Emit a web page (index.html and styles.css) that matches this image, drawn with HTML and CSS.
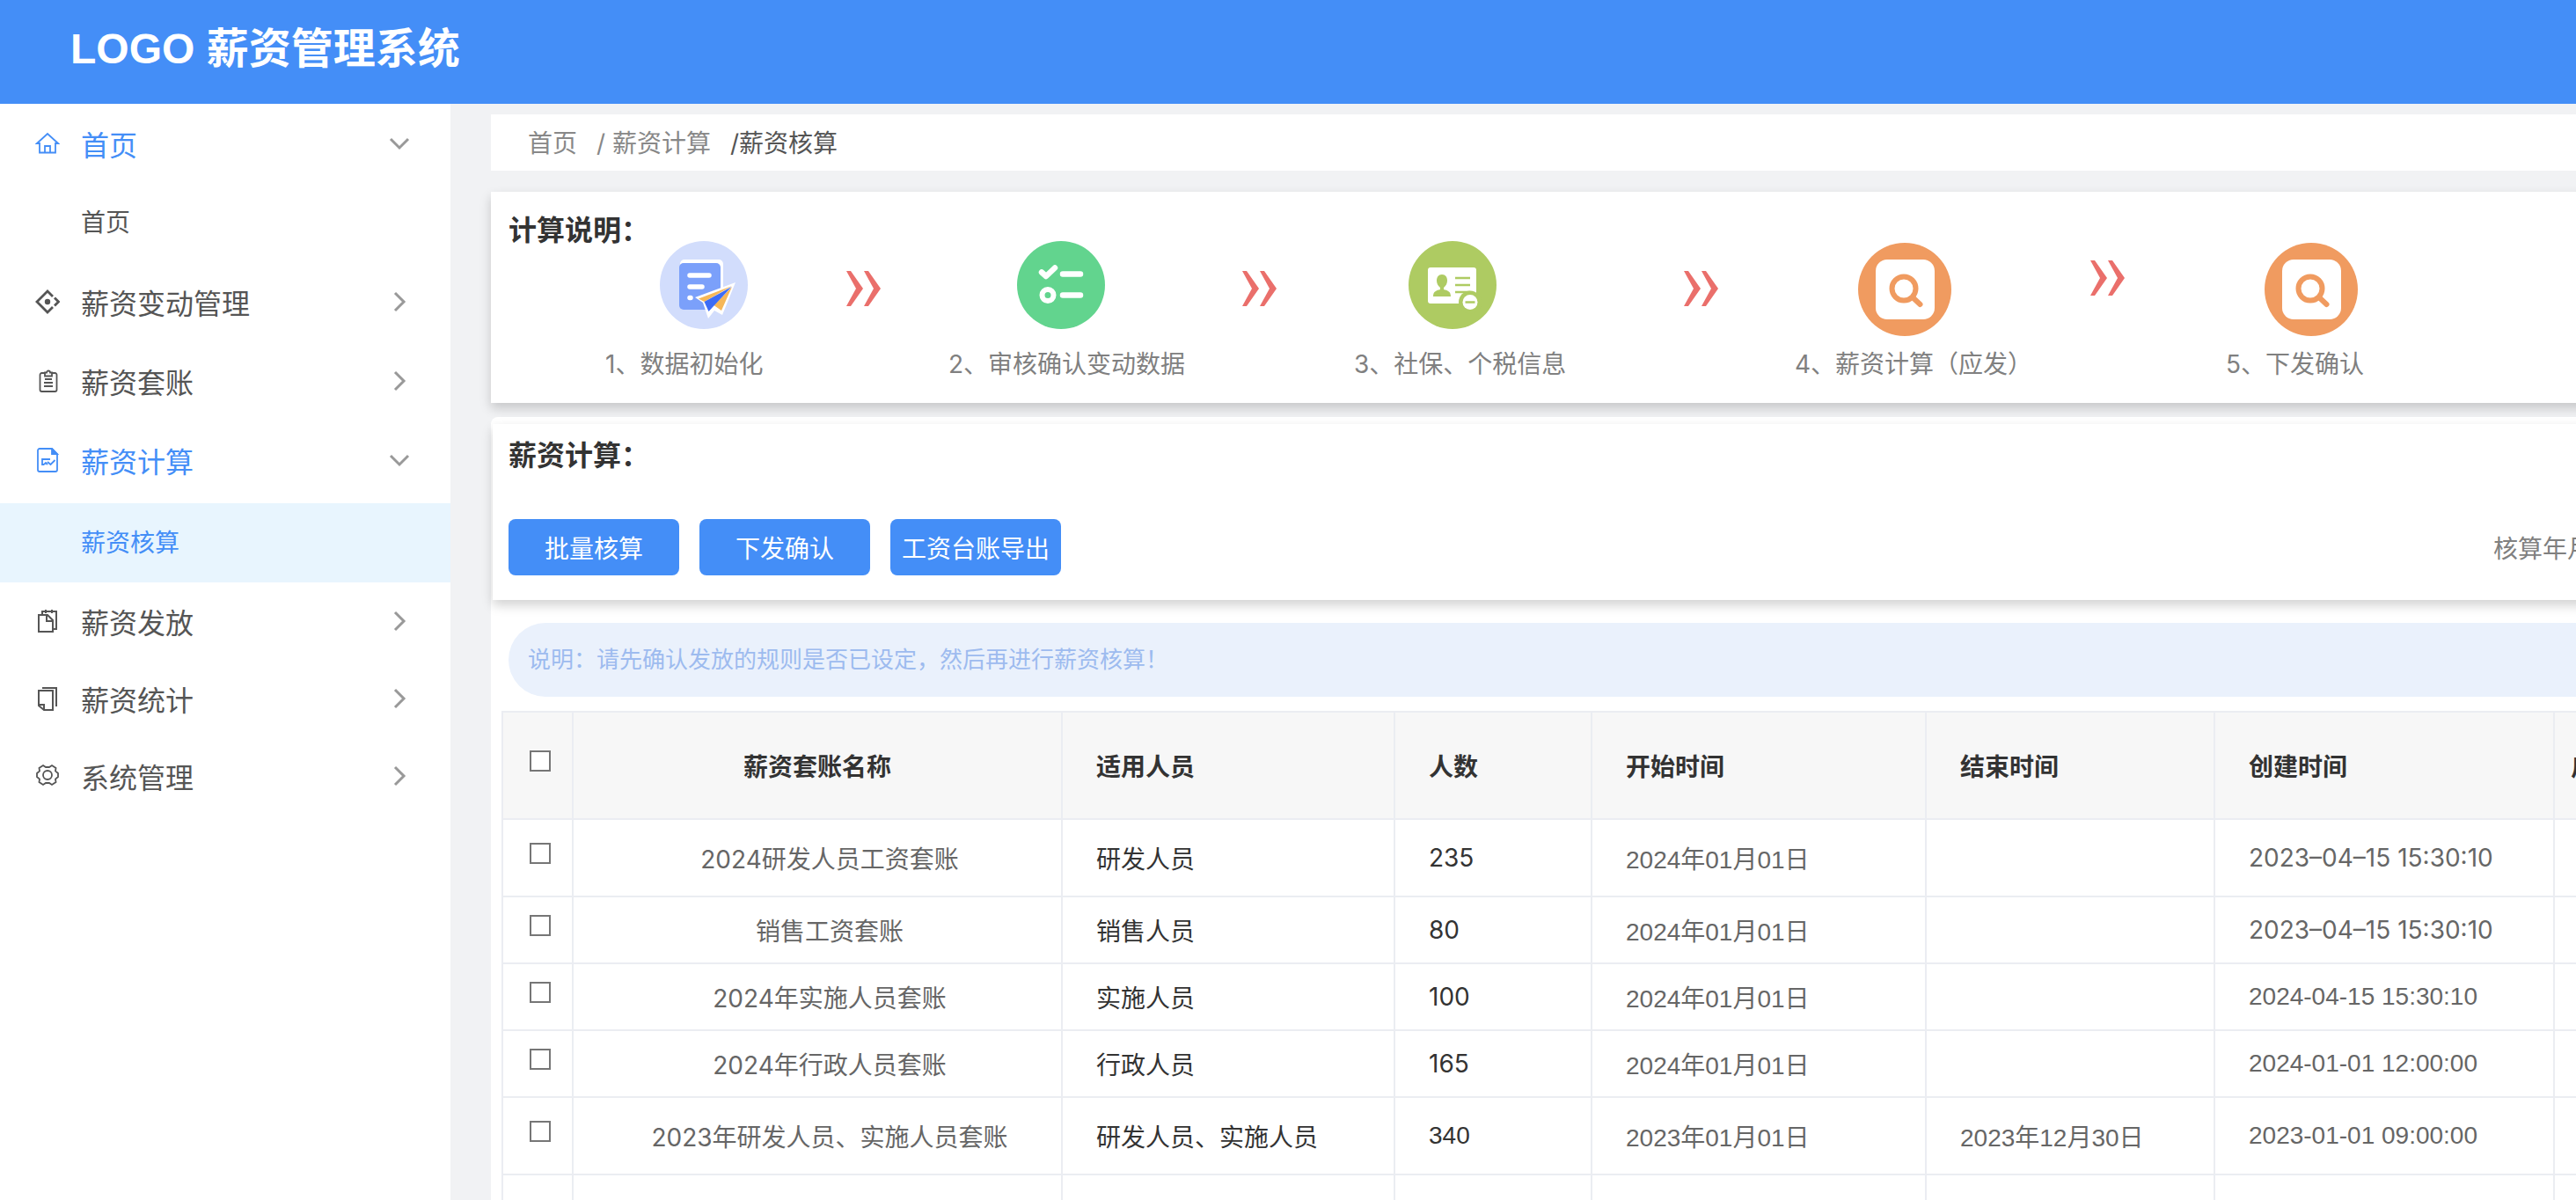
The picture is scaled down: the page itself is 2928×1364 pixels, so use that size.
FILE: index.html
```
<!DOCTYPE html>
<html lang="zh-CN">
<head>
    <meta charset="utf-8">
    <title>薪资管理系统</title>
    <link rel="stylesheet" href="styles.css">
</head>
<body>

<header class="header">
    <h1 class="logo">LOGO 薪资管理系统</h1>
</header>

<div class="page">
    <nav class="sidebar">
        <a href="#" class="menu-item active">
            <svg class="menu-icon" viewBox="0 0 28 28" fill="none" stroke="currentColor" stroke-width="1.800"><path d="M2 14 14 3l12 11h-3v10.500H5V14zM11 24v-7h6v7"/></svg>
            <span>首页</span>
            <svg class="chevron" viewBox="0 0 28 28"><path d="M4 9l10 10L24 9"/></svg>
        </a>
        <a href="#" class="menu-sub">首页</a>
        <a href="#" class="menu-item">
            <svg class="menu-icon" viewBox="0 0 28 28" fill="none" stroke="currentColor" stroke-width="2.800"><path d="M20 8l-6-6L2 14l12 12 6-6M22 9.500l4.500 4.500-4.500 4.500"/><circle cx="14" cy="14" r="3.200" fill="currentColor" stroke="none"/></svg>
            <span>薪资变动管理</span>
            <svg class="chevron" viewBox="0 0 28 28"><path d="M9 4l10 10L9 24"/></svg>
        </a>
        <a href="#" class="menu-item">
            <svg class="menu-icon" viewBox="0 0 28 28" fill="none" stroke="currentColor" stroke-width="1.800"><path d="M11 5H7.500a2 2 0 0 0-2 2v17a2 2 0 0 0 2 2h15a2 2 0 0 0 2-2V7a2 2 0 0 0-2-2H19M11 4.500h2a2 2 0 0 1 4 0h2v4h-8z"/><path d="M11 12h8M10 16h10M10 20h10"/></svg>
            <span>薪资套账</span>
            <svg class="chevron" viewBox="0 0 28 28"><path d="M9 4l10 10L9 24"/></svg>
        </a>
        <a href="#" class="menu-item active">
            <svg class="menu-icon" viewBox="0 0 28 28" fill="none" stroke="currentColor" stroke-width="1.800"><path d="M19 1H5a2 2 0 0 0-2 2v22a2 2 0 0 0 2 2h18a2 2 0 0 0 2-2V7z"/><path d="M19 1l6 6h-6z" fill="currentColor"/><path d="M10 19H8v-6h9M14 16l3.500 3 5-5M10 19l2-2 2 2"/></svg>
            <span>薪资计算</span>
            <svg class="chevron" viewBox="0 0 28 28"><path d="M4 9l10 10L24 9"/></svg>
        </a>
        <a href="#" class="menu-sub selected">薪资核算</a>
        <div class="menu-compact">
            <a href="#" class="menu-item">
                <svg class="menu-icon" viewBox="0 0 28 28" fill="none" stroke="currentColor" stroke-width="2"><path d="M4 7h10l6 6v13H4z"/><path d="M13 7v7h7M8 7V3h16v20h-4M12 1v4M19 1v4"/></svg>
                <span>薪资发放</span>
                <svg class="chevron" viewBox="0 0 28 28"><path d="M9 4l10 10L9 24"/></svg>
            </a>
            <a href="#" class="menu-item">
                <svg class="menu-icon" viewBox="0 0 28 28" fill="none" stroke="currentColor" stroke-width="2"><path d="M4 5h16v22H10l-6-5zM4 21h6v6M8 2h16v21"/></svg>
                <span>薪资统计</span>
                <svg class="chevron" viewBox="0 0 28 28"><path d="M9 4l10 10L9 24"/></svg>
            </a>
            <a href="#" class="menu-item">
                <svg class="menu-icon" viewBox="0 0 28 28" fill="none" stroke="currentColor" stroke-width="1.800"><path d="M9 2l3 2h4l3-2 4.500 3-.5 3.500 3 2.500v4l-3 2.500.5 3.500-4.500 3-3-2h-4l-3 2L4.500 21l.5-3.500L2 15v-4l3-2.500L4.500 5z"/><circle cx="14" cy="13" r="5"/></svg>
                <span>系统管理</span>
                <svg class="chevron" viewBox="0 0 28 28"><path d="M9 4l10 10L9 24"/></svg>
            </a>
        </div>
    </nav>

    <main class="main">
        <div class="content">
            <div class="breadcrumb">
                <a href="#">首页</a>
                <a href="#">/ 薪资计算</a>
                <span class="current">/薪资核算</span>
            </div>

            <section class="card guide">
                <h2 class="title">计算说明：</h2>
                <div class="steps">
                    <div class="step">
                        <svg class="step-icon" viewBox="0 0 100 100">
                            <circle cx="50" cy="50" r="50" fill="#d2ddfc"/>
                            <rect x="23" y="21" width="49" height="50" rx="5" fill="#fff"/>
                            <rect x="22" y="25" width="47" height="53" rx="5" fill="#7ba0fa"/>
                            <path d="M34 39h22M34 52h14M34 64.500h1" stroke="#fff" stroke-width="5.500" stroke-linecap="round"/>
                            <path d="M86 47 40 64l9 6 6 18 7-9 9 5z" fill="#fff"/>
                            <path d="M82 51 44 65.500l6.500 3.500zM82 52 61.500 73l8.500 6z" fill="#f6b758"/>
                            <path d="M81.500 52 50.500 69l5 11z" fill="#3c6cf6"/>
                        </svg>
                        <span>1、数据初始化</span>
                    </div>
                    <svg class="arrow" viewBox="0 0 39 40"><path d="M0 0h5l14 20L5 40H0l11-20zM20 0h5l14 20-14 20h-5l11-20z"/></svg>
                    <div class="step">
                        <svg class="step-icon" viewBox="0 0 100 100">
                            <circle cx="50" cy="50" r="50" fill="#62d48e"/>
                            <path d="M28 35.500l5 4.500 10-9.500M52 37.500h20M52 61.500h20" fill="none" stroke="#fff" stroke-width="6.500" stroke-linecap="round" stroke-linejoin="round"/>
                            <circle cx="35" cy="61.500" r="6.500" fill="none" stroke="#fff" stroke-width="6"/>
                        </svg>
                        <span>2、审核确认变动数据</span>
                    </div>
                    <svg class="arrow" viewBox="0 0 39 40"><path d="M0 0h5l14 20L5 40H0l11-20zM20 0h5l14 20-14 20h-5l11-20z"/></svg>
                    <div class="step">
                        <svg class="step-icon" viewBox="0 0 100 100">
                            <circle cx="50" cy="50" r="50" fill="#aecb62"/>
                            <rect x="22" y="30" width="55" height="41" rx="3" fill="#fff"/>
                            <path d="M38 38c-4 0-6 3-6 7 0 3 1.500 6 4 8v2c-4 1-8 2-8 8h20c0-6-4-7-8-8v-2c2.500-2 4-5 4-8 0-4-2-7-6-7z" fill="#aecb62"/>
                            <path d="M53 42h17M53 50h17M53 58h17" stroke="#aecb62" stroke-width="2.500"/>
                            <circle cx="70" cy="69.500" r="13" fill="#aecb62"/>
                            <circle cx="70" cy="69.500" r="8.500" fill="#fff"/>
                            <path d="M64.500 69.500h11" stroke="#aecb62" stroke-width="2.500"/>
                        </svg>
                        <span>3、社保、个税信息</span>
                    </div>
                    <svg class="arrow" viewBox="0 0 39 40"><path d="M0 0h5l14 20L5 40H0l11-20zM20 0h5l14 20-14 20h-5l11-20z"/></svg>
                    <div class="step">
                        <svg class="step-icon large" viewBox="0 0 106 106">
                            <circle cx="53" cy="53" r="53" fill="#f09b60"/>
                            <rect x="20" y="19" width="67" height="68" rx="13" fill="#fff"/>
                            <circle cx="52" cy="52" r="13.500" fill="none" stroke="#f09b60" stroke-width="6"/>
                            <path d="M62 62l8.500 8" stroke="#f09b60" stroke-width="6" stroke-linecap="round"/>
                        </svg>
                        <span>4、薪资计算（应发）</span>
                    </div>
                    <svg class="arrow high" viewBox="0 0 39 40"><path d="M0 0h5l14 20L5 40H0l11-20zM20 0h5l14 20-14 20h-5l11-20z"/></svg>
                    <div class="step">
                        <svg class="step-icon large" viewBox="0 0 106 106">
                            <circle cx="53" cy="53" r="53" fill="#f09b60"/>
                            <rect x="20" y="19" width="67" height="68" rx="13" fill="#fff"/>
                            <circle cx="52" cy="52" r="13.500" fill="none" stroke="#f09b60" stroke-width="6"/>
                            <path d="M62 62l8.500 8" stroke="#f09b60" stroke-width="6" stroke-linecap="round"/>
                        </svg>
                        <span>5、下发确认</span>
                    </div>
                </div>
            </section>

            <div class="panel">
                <section class="card tools">
                    <h2 class="title">薪资计算：</h2>
                    <div class="toolbar">
                        <button type="button" class="btn">批量核算</button>
                        <button type="button" class="btn">下发确认</button>
                        <button type="button" class="btn">工资台账导出</button>
                        <div class="filter">
                            <label for="month">核算年月：</label>
                            <input type="text" id="month">
                        </div>
                    </div>
                </section>

                <p class="hint">说明：请先确认发放的规则是否已设定，然后再进行薪资核算！</p>

                <table class="table">
                    <colgroup>
                        <col class="c-check"><col class="c-name"><col class="c-staff"><col class="c-num">
                        <col class="c-start"><col class="c-end"><col class="c-created"><col>
                    </colgroup>
                    <thead>
                        <tr>
                            <th class="check"><input type="checkbox" aria-label="全选"></th>
                            <th class="name">薪资套账名称</th>
                            <th>适用人员</th>
                            <th>人数</th>
                            <th>开始时间</th>
                            <th>结束时间</th>
                            <th>创建时间</th>
                            <th class="status">启用状态</th>
                        </tr>
                    </thead>
                    <tbody>
                        <tr class="tall">
                            <td class="check"><input type="checkbox" aria-label="2024研发人员工资套账"></td>
                            <td class="name">2024研发人员工资套账</td>
                            <td class="dark">研发人员</td>
                            <td class="dark">235</td>
                            <td class="date">2024年01月01日</td>
                            <td class="date"></td>
                            <td>2023–04–15 15:30:10</td>
                            <td></td>
                        </tr>
                        <tr>
                            <td class="check"><input type="checkbox" aria-label="销售工资套账"></td>
                            <td class="name">销售工资套账</td>
                            <td class="dark">销售人员</td>
                            <td class="dark">80</td>
                            <td class="date">2024年01月01日</td>
                            <td class="date"></td>
                            <td>2023–04–15 15:30:10</td>
                            <td></td>
                        </tr>
                        <tr>
                            <td class="check"><input type="checkbox" aria-label="2024年实施人员套账"></td>
                            <td class="name">2024年实施人员套账</td>
                            <td class="dark">实施人员</td>
                            <td class="dark">100</td>
                            <td class="date">2024年01月01日</td>
                            <td class="date"></td>
                            <td class="date">2024-04-15 15:30:10</td>
                            <td></td>
                        </tr>
                        <tr>
                            <td class="check"><input type="checkbox" aria-label="2024年行政人员套账"></td>
                            <td class="name">2024年行政人员套账</td>
                            <td class="dark">行政人员</td>
                            <td class="dark">165</td>
                            <td class="date">2024年01月01日</td>
                            <td class="date"></td>
                            <td class="date">2024-01-01 12:00:00</td>
                            <td></td>
                        </tr>
                        <tr class="tall">
                            <td class="check"><input type="checkbox" aria-label="2023年研发人员、实施人员套账"></td>
                            <td class="name">2023年研发人员、实施人员套账</td>
                            <td class="dark">研发人员、实施人员</td>
                            <td class="dark date">340</td>
                            <td class="date">2023年01月01日</td>
                            <td class="date">2023年12月30日</td>
                            <td class="date">2023-01-01 09:00:00</td>
                            <td></td>
                        </tr>
                        <tr>
                            <td></td><td></td><td></td><td></td><td></td><td></td><td></td><td></td>
                        </tr>
                    </tbody>
                </table>
            </div>
        </div>
    </main>
</div>

</body>
</html>
```
FILE: styles.css
```
* { box-sizing: border-box; }

html, body { height: 100%; }

body {
    margin: 0;
    display: flex;
    flex-direction: column;
    overflow: hidden;
    background: #f1f2f4;
    color: #666;
    font-family: Inter, "Noto Sans CJK SC", sans-serif;
    font-size: 28px;
}

a { color: inherit; text-decoration: none; }

.header {
    flex: none;
    height: 118px;
    padding: 0 80px;
    background: #448ef7;
}
.logo {
    margin: 0;
    color: #fff;
    font: bold 48px/112px "Liberation Sans", "Noto Sans CJK SC", sans-serif;
}

.page {
    flex: 1;
    min-height: 0;
    display: flex;
}

/* sidebar */
.sidebar {
    flex: none;
    width: 512px;
    background: #fff;
    color: #555;
}
.menu-item {
    display: flex;
    align-items: center;
    height: 90px;
    padding: 0 44px 0 40px;
    font-size: 32px;
}
.menu-item span { flex: 1; }
.menu-compact .menu-item { height: 88px; }
.menu-icon {
    width: 28px;
    height: 28px;
    margin-right: 24px;
}
.chevron {
    width: 28px;
    height: 28px;
    fill: none;
    stroke: #999;
    stroke-width: 3;
}
.menu-sub {
    display: block;
    padding-left: 92px;
    line-height: 90px;
}
.active, .selected { color: #448ef7; }
.selected {
    margin-top: 4px;
    background: #e8f5fe;
}

/* content */
.main {
    flex: 1;
    min-width: 0;
    padding: 12px 0 0 46px;
    overflow: hidden;
}
.content {
    min-width: 2600px;
    height: 100%;
    display: flex;
    flex-direction: column;
}
.breadcrumb {
    display: flex;
    gap: 22px;
    padding: 2px 0 0 42px;
    background: #fff;
    color: #888;
    line-height: 62px;
}
.breadcrumb .current { color: #555; }

.card {
    background: #fff;
    box-shadow: 0 6px 12px rgba(0, 0, 0, .18);
}
.title {
    margin: 0;
    color: #333;
    font-size: 32px;
    line-height: 32px;
}

.guide {
    margin-top: 24px;
    padding: 28px 0 24px 20px;
}
.steps {
    display: grid;
    grid-template-columns: 274px 116px 334px 127px 375px 126px 336px 154px 1fr;
    margin-top: -4px;
    padding-left: 110px;
    color: #808080;
    white-space: nowrap;
}
.step {
    display: grid;
    grid-template-rows: 120px 40px;
    line-height: 40px;
}
.step-icon {
    width: 100px;
    height: 100px;
    margin-left: 62px;
}
.step:nth-child(3) .step-icon { margin-left: 78px; }
.step-icon.large {
    width: 106px;
    height: 106px;
    margin: 2px 0 0 72px;
}
.step:last-child .step-icon { margin-left: 44px; }
.arrow {
    width: 39px;
    height: 40px;
    margin-top: 34px;
    fill: #ea6f6b;
}
.arrow.high { margin-top: 22px; }

.panel {
    flex: 1;
    margin-top: 16px;
    padding: 8px 0 0 2px;
    border-radius: 8px 0 0 0;
    background: #fff;
}

.tools { padding: 20px 20px 28px 18px; }
.toolbar {
    display: flex;
    align-items: center;
    gap: 23px;
    margin-top: 56px;
}
.btn {
    width: 194px;
    height: 64px;
    padding: 0;
    border: 0;
    border-radius: 8px;
    background: #448ef7;
    color: #fff;
    font: inherit;
}
.filter {
    display: flex;
    align-items: center;
    width: 304px;
    margin-left: auto;
    color: #808080;
    white-space: nowrap;
}
.filter input {
    flex: 1;
    min-width: 0;
    height: 64px;
    border: 2px solid #ddd;
    border-radius: 8px;
}

.hint {
    margin: 26px 0 16px 18px;
    padding-left: 22px;
    border-radius: 42px 0 0 42px;
    background: #eaf1fc;
    color: #9dbbef;
    font-size: 26px;
    line-height: 84px;
}

.table {
    width: 2572px;
    margin-left: 10px;
    table-layout: fixed;
    border-collapse: collapse;
}
.c-check { width: 80px; }
.c-name { width: 556px; }
.c-staff { width: 378px; }
.c-num { width: 224px; }
.c-start { width: 380px; }
.c-end { width: 328px; }
.c-created { width: 386px; }

.table th, .table td {
    height: 76px;
    padding: 0 0 0 38px;
    border: 2px solid #ebedf2;
    text-align: left;
    white-space: nowrap;
}
.table th {
    height: 122px;
    background: #f7f7f7;
    color: #333;
}
.table .tall td { height: 88px; }
.table .name {
    padding: 0;
    text-align: center;
}
.table td.name { padding-left: 28px; }
.table .status { padding-left: 18px; }
.table .check {
    padding: 0 0 10px 6px;
    text-align: center;
    line-height: 0;
}
.table .dark { color: #333; }
.date { font-family: "Liberation Sans", "Noto Sans CJK SC", sans-serif; }

.check input {
    appearance: none;
    width: 24px;
    height: 24px;
    margin: 0;
    border: 2px solid #767676;
    background: #fff;
}
```
